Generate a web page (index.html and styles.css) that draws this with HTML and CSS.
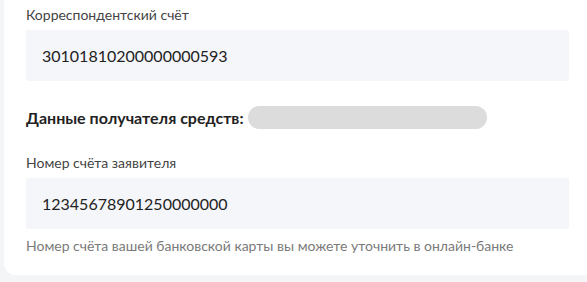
FILE: index.html
```html
<!DOCTYPE html>
<html lang="ru">
  <head>
    <meta charset="UTF-8" />
    <meta name="viewport" content="width=device-width, initial-scale=1.0" />
    <title>Реквизиты</title>
    <link rel="stylesheet" href="styles.css">
  </head>
  <body>
    <div class="card">
      <div class="field">
        <label class="field-label">Корреспондентский счёт</label>
        <div class="field-input">30101810200000000593</div>
      </div>

      <div class="section-title">
        <h2>Данные получателя средств:</h2>
        <span class="placeholder"></span>
      </div>

      <div class="field">
        <label class="field-label">Номер счёта заявителя</label>
        <div class="field-input">12345678901250000000</div>
        <p class="field-hint">Номер счёта вашей банковской карты вы можете уточнить в онлайн-банке</p>
      </div>
    </div>
  </body>
</html>
```

FILE: styles.css
```css
* {
  margin: 0;
  padding: 0;
  box-sizing: border-box;
}

body {
  font-family: Lato, "Noto Sans", sans-serif;
  background-color: #f4f5f7;
  color: #222;
  width: 100%;
  height: 100vh;
  overflow: hidden;
}

.card {
  margin-left: 4px;
  width: 600px;
  height: 275px;
  background-color: #fff;
  border-radius: 0 0 12px 12px;
  padding: 6px 0 0 22px;
}

.field {
  width: 543px;
}

.field-label {
  display: block;
  font-size: 14px;
  line-height: 18px;
  color: #444;
  margin-bottom: 6px;
}

.field-input {
  height: 51px;
  background-color: #f5f6f9;
  border-radius: 2px;
  padding: 0 16px;
  display: flex;
  align-items: center;
  font-size: 16px;
  color: #222;
}

.section-title {
  display: flex;
  align-items: center;
  gap: 4px;
  margin-top: 25px;
  margin-bottom: 25px;
}

.section-title h2 {
  font-size: 16px;
  font-weight: 700;
  color: #222;
}

.placeholder {
  width: 239px;
  height: 23px;
  border-radius: 12px;
  background-color: #dcdcdc;
}

.field-hint {
  margin-top: 8px;
  font-size: 14px;
  color: #7a7a7a;
}
```
